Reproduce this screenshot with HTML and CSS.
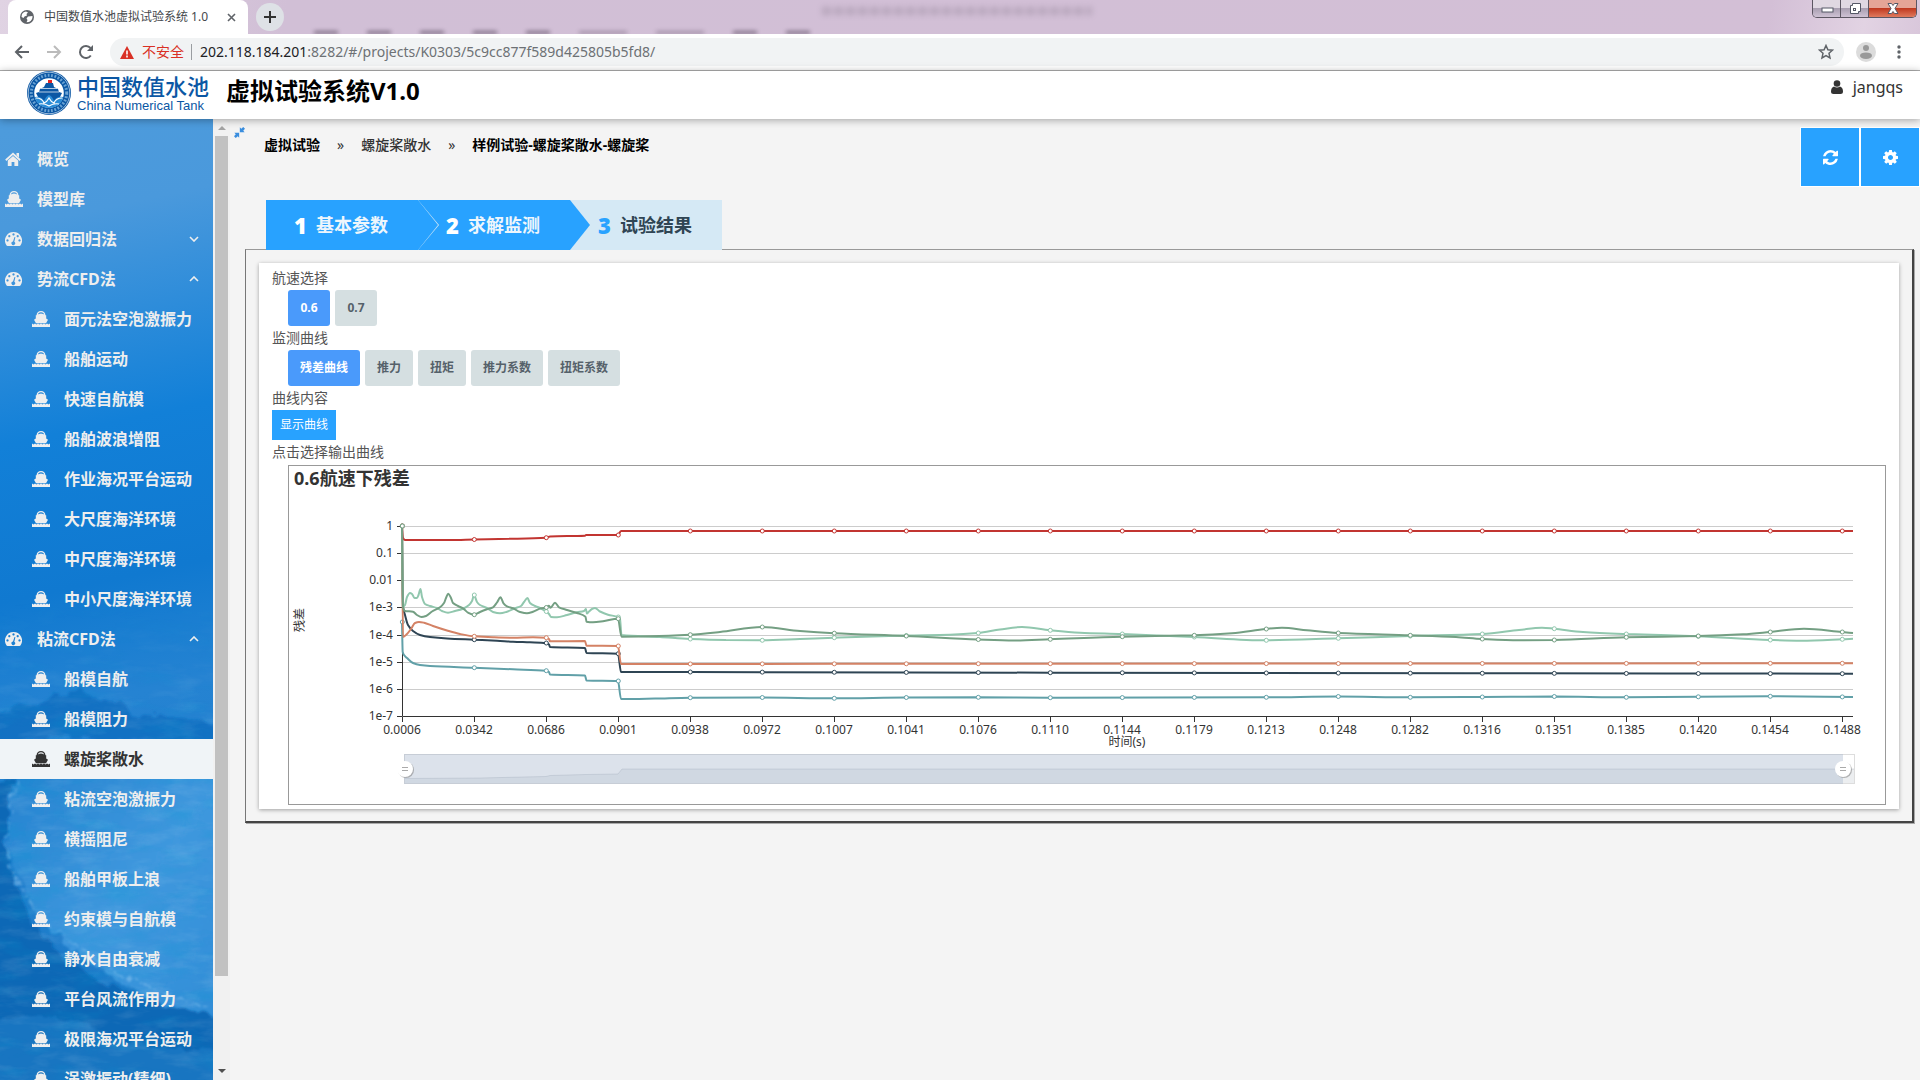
FILE: index.html
```
<!DOCTYPE html>
<html lang="zh-CN">
<head>
<meta charset="utf-8">
<title>中国数值水池虚拟试验系统 1.0</title>
<link rel="stylesheet" href="styles.css">
</head>
<body>
<svg class="defs" width="0" height="0" aria-hidden="true">
  <symbol id="i-home" viewBox="0 0 16 14"><path d="M8 .5 15.800 7.600 14.600 9 8 3 1.400 9 .2 7.600zM11.500 1h2.500v4.500l-2.500-2.200zM8 4l5.200 4.600V14H9.400v-4H6.600v4H2.800V8.600z"/></symbol>
  <symbol id="i-ship" viewBox="0 0 18 16"><path d="M4.500 4.500Q4.800 0 9 0t4.500 4.500h-1.300Q12 1.300 9 1.300T5.800 4.500zM5 4.200Q6.500 2.500 9 2.500t4 1.700h1.200v3.300l1.800 1.300L14 12.200H4L2 8.800l1.800-1.300V4.200zM0 12.600l1.500 1 1.500-1 1.500 1 1.500-1 1.500 1 1.500-1 1.500 1 1.500-1 1.500 1 1.500-1 1.500 1 1.500-1V16H0z"/></symbol>
  <symbol id="i-dash" viewBox="0 0 17 14"><path fill-rule="evenodd" d="M8.500 0A8.500 8.500 0 0 1 15.600 13.200Q15.200 14 14.500 14h-12Q1.800 14 1.400 13.200A8.500 8.500 0 0 1 8.500 0zM8.500 1.300a1.100 1.100 0 1 0 .01 0zM4.300 3a1.100 1.100 0 1 0 .01 0zM12.700 3a1.100 1.100 0 1 0 .01 0zM2.500 7.300a1.100 1.100 0 1 0 .01 0zM14.500 7.300a1.100 1.100 0 1 0 .01 0zM9.500 5 8 9.500a1.800 1.800 0 1 0 1.300.300L10.400 5.300z"/></symbol>
  <symbol id="i-down" viewBox="0 0 10 6"><path d="M1 1l4 4 4-4" fill="none" stroke="currentColor" stroke-width="1.600"/></symbol>
  <symbol id="i-up" viewBox="0 0 10 6"><path d="M1 5l4-4 4 4" fill="none" stroke="currentColor" stroke-width="1.600"/></symbol>
  <symbol id="i-refresh" viewBox="0 0 1536 1536"><path d="M1511 928q0 5-1 7-64 268-268 434.500t-478 166.500q-146 0-282.500-55t-243.500-157l-129 129q-19 19-45 19t-45-19-19-45v-448q0-26 19-45t45-19h448q26 0 45 19t19 45-19 45l-137 137q71 66 161 102t187 36q134 0 250-65t186-179q11-17 53-117 8-23 30-23h192q13 0 22.500 9.500t9.500 22.500zm25-800v448q0 26-19 45t-45 19h-448q-26 0-45-19t-19-45 19-45l138-138q-148-137-349-137-134 0-250 65t-186 179q-11 17-53 117-8 23-30 23h-199q-13 0-22.500-9.500t-9.500-22.500v-7q65-268 270-434.500t480-166.500q146 0 284 55.500t245 156.500l130-129q19-19 45-19t45 19 19 45z"/></symbol>
  <symbol id="i-cog" viewBox="0 0 1536 1536"><path d="M1024 768q0-106-75-181t-181-75-181 75-75 181 75 181 181 75 181-75 75-181zm512-109v222q0 12-8 23t-20 13l-185 28q-19 54-39 91 35 50 107 138 10 12 10 25t-9 23q-27 37-99 108t-94 71q-12 0-26-9l-138-108q-44 23-91 38-16 136-29 186-7 28-36 28h-222q-14 0-24.500-8.500t-11.500-21.500l-28-184q-49-16-90-37l-141 107q-10 9-25 9-14 0-25-11-126-114-165-168-7-10-7-23 0-12 8-23 15-21 51-66.500t54-70.500q-27-50-41-99l-183-27q-13-2-21-12.500t-8-23.500v-222q0-12 8-23t19-13l186-28q14-46 39-92-40-57-107-138-10-12-10-24 0-10 9-23 26-36 98.500-107.500t94.500-71.500q13 0 26 10l138 107q44-23 91-38 16-136 29-186 7-28 36-28h222q14 0 24.500 8.500t11.500 21.500l28 184q49 16 90 37l142-107q9-9 24-9 13 0 25 10 129 119 165 170 7 8 7 22 0 12-8 23-15 21-51 66.500t-54 70.500q26 50 41 98l183 28q13 2 21 12.500t8 23.500z"/></symbol>
</svg>

<div class="tabstrip">
  <div class="tab">
    <svg width="14" height="14" viewBox="0 0 14 14"><circle cx="7" cy="7" r="7" fill="#5f6368"/><path d="M2 4Q3.500 1.500 6 1.500L8 2.500 6.500 4 7 5.500 4.500 6.500 3.500 8 1.500 7zM8 6.500l4.500-.5Q12.800 10 9 12L6.500 12.300 7.500 10 6.500 8.500z" fill="#fff"/></svg>
    <span class="tab-title">中国数值水池虚拟试验系统 1.0</span>
    <button class="bare" aria-label="关闭标签页"><svg width="9" height="9" viewBox="0 0 9 9"><path d="M1 1l7 7M8 1l-7 7" stroke="#5f6368" stroke-width="1.600"/></svg></button>
  </div>
  <button class="newtab" aria-label="新标签页"><svg width="12" height="12" viewBox="0 0 12 12"><path d="M6 0v12M0 6h12" stroke="#333" stroke-width="2"/></svg></button>
  <div class="ghosts" aria-hidden="true">
    <i class="ghost-title"></i>
    <div class="ghost-menu"><i></i><i></i><i></i><i></i><i></i><i></i><i></i><i></i><i></i></div>
  </div>
  <div class="winbtns">
    <button aria-label="最小化"><svg width="14" height="10" viewBox="0 0 14 10"><rect x="2" y="4" width="11" height="4" fill="#fff" stroke="#555866"/></svg></button>
    <button aria-label="还原"><svg width="14" height="14" viewBox="0 0 14 14"><path d="M4.500 1.500h8v8h-2v2h-8v-8h2z" fill="#fff" stroke="#555866"/><rect x="5.500" y="6.500" width="2" height="2" fill="none" stroke="#555866"/></svg></button>
    <button class="close" aria-label="关闭"><svg width="12" height="11" viewBox="0 0 12 11"><path d="M1 .5h3.500L6 2.500 7.500.5H11L8 5.500l3 5H7.500L6 8.500l-1.500 2H1l3-5z" fill="#fff" stroke="#555866"/></svg></button>
  </div>
</div>

<div class="toolbar">
  <button class="bare" aria-label="后退"><svg width="16" height="14" viewBox="0 0 16 14"><path d="M15 7H2M8 1L2 7l6 6" fill="none" stroke="#5f6368" stroke-width="2"/></svg></button>
  <button class="bare" aria-label="前进"><svg width="16" height="14" viewBox="0 0 16 14"><path d="M1 7h13M8 1l6 6-6 6" fill="none" stroke="#bbb" stroke-width="2"/></svg></button>
  <button class="bare" aria-label="刷新"><svg width="16" height="16" viewBox="0 0 16 16"><path d="M12.800 11.500A6 6 0 1 1 12.500 4" fill="none" stroke="#5f6368" stroke-width="2"/><path d="M15 1v6H9z" fill="#5f6368"/></svg></button>
  <div class="omnibox">
    <svg width="14" height="13" viewBox="0 0 14 13"><path d="M7 0l7 13H0z" fill="#d93025"/><path d="M7 4.500v4M7 9.500v2" stroke="#fff" stroke-width="1.600"/></svg>
    <span class="unsafe">不安全</span>
    <span class="url"><b>202.118.184.201</b>:8282/#/projects/K0303/5c9cc877f589d425805b5fd8/</span>
    <svg width="16" height="16" viewBox="0 0 16 16"><path d="M8 1.500l1.900 4.300 4.600.4-3.500 3.100 1 4.600L8 11.500 4 13.900l1-4.600L1.500 6.200l4.600-.4z" fill="none" stroke="#5f6368" stroke-width="1.500"/></svg>
  </div>
  <svg width="20" height="20" viewBox="0 0 20 20"><circle cx="10" cy="10" r="10" fill="#dcdcdc"/><circle cx="10" cy="6" r="3" fill="#999"/><ellipse cx="10" cy="13.700" rx="6" ry="3.300" fill="#999"/></svg>
  <button class="bare kebab" aria-label="菜单"><svg width="4" height="14" viewBox="0 0 4 14"><g fill="#5f6368"><circle cx="2" cy="2" r="1.700"/><circle cx="2" cy="7" r="1.700"/><circle cx="2" cy="12" r="1.700"/></g></svg></button>
</div>

<header class="header">
  <svg class="seal" width="44" height="44" viewBox="0 0 44 44">
    <circle cx="22" cy="22" r="22" fill="#0b57a4"/><circle cx="22" cy="22" r="20.800" fill="none" stroke="#fff" stroke-width=".6"/>
    <circle cx="22" cy="22" r="17.700" fill="none" stroke="#6ba3d4" stroke-width="3" stroke-dasharray="1.800 1.600"/>
    <circle cx="22" cy="22" r="14.800" fill="#fff"/>
    <path d="M19 12h7l1 4 4 2 1 3 3 1-4 8H13l-4-8 3-1 1-3 4-2z" fill="#0b57a4"/>
    <path d="M14 17.500h16M12 21h20" stroke="#fff" stroke-width=".7"/>
    <path d="M21 9h4v3h-4z" fill="#e02424"/>
    <path d="M8 26q6-1 9 4 2-5 5-6 3 1 5 6 3-5 9-4-1 6-6 9-8 4-16 0-5-3-6-9z" fill="#2a8cd6"/>
    <path d="M9 27q6 0 8 5 3-1 5-5 2 4 5 5 2-5 8-5M12 33q5-1 10 2 5-3 10-2" fill="none" stroke="#fff" stroke-width="1.200"/>
  </svg>
  <div class="brand"><span class="brand-cn">中国数值水池</span><span class="brand-en">China Numerical Tank</span></div>
  <h1 class="system">虚拟试验系统V1.0</h1>
  <a class="user" href="#user"><svg width="12" height="14" viewBox="0 0 12 14"><circle cx="6" cy="3.500" r="3.300" fill="#333"/><path d="M3 6.500q3 2 6 0 3 1 3 5Q12 14 9.500 14h-7Q0 14 0 11.500q0-4 3-5z" fill="#333"/></svg>jangqs</a>
</header>

<div class="shell">
  <nav class="sidebar" aria-label="主菜单">
    <svg class="sea" viewBox="0 0 213 961" preserveAspectRatio="none" aria-hidden="true">
      <defs>
        <linearGradient id="sky" gradientUnits="userSpaceOnUse" x1="60" y1="0" x2="260" y2="940"><stop offset="0" stop-color="#4d9bdc"/><stop offset=".1" stop-color="#4a99dc"/><stop offset=".32" stop-color="#1280d8"/><stop offset=".48" stop-color="#1079d0"/><stop offset=".6" stop-color="#2583d2"/><stop offset="1" stop-color="#1a78c6"/></linearGradient>
        <linearGradient id="barrel" x1="0" y1="0" x2="1" y2="1"><stop offset="0" stop-color="#2583d0"/><stop offset=".5" stop-color="#3f98de"/><stop offset="1" stop-color="#2f8cd6"/></linearGradient>
        <filter id="foam" x="0" y="0" width="1" height="1"><feTurbulence type="fractalNoise" baseFrequency=".03 .09" numOctaves="4" seed="8"/><feColorMatrix values="0 0 0 0 1  0 0 0 0 1  0 0 0 0 1  2.200 0 0 0 -1"/></filter>
        <filter id="deep" x="0" y="0" width="1" height="1"><feTurbulence type="fractalNoise" baseFrequency=".02 .06" numOctaves="4" seed="21"/><feColorMatrix values="0 0 0 0 0  0 0 0 0 .33  0 0 0 0 .65  2.600 0 0 0 -1.200"/></filter>
        <filter id="rough" x="-.1" y="-.1" width="1.200" height="1.200"><feTurbulence type="fractalNoise" baseFrequency=".07" numOctaves="3" seed="3" result="n"/><feDisplacementMap in="SourceGraphic" in2="n" scale="16" xChannelSelector="R" yChannelSelector="G"/><feGaussianBlur stdDeviation=".8"/></filter>
        <linearGradient id="fade" x1="0" y1="0" x2="0" y2="1"><stop offset="0" stop-color="#000"/><stop offset=".3" stop-color="#fff"/></linearGradient>
        <mask id="lower"><rect y="480" width="213" height="481" fill="url(#fade)"/></mask>
      </defs>
      <rect width="213" height="961" fill="url(#sky)"/>
      <path d="M-10 592q30-6 50-6 12-14 40-13 40 8 60 24 40-2 90 12v20q-90-14-120-5-60-16-120 8z" fill="#0c6cbf" opacity=".75" filter="url(#rough)"/>
      <path d="M0 620H213V660H0z" fill="#1a79c8"/>
      <path d="M22 655H230V915Q110 870 50 810 0 745 10 700 12 670 22 655z" fill="url(#barrel)" filter="url(#rough)"/>
      <path d="M-10 660H16Q-4 720 12 750 20 800 70 845 140 885 230 902V975H-10z" fill="#0a68b6" filter="url(#rough)"/>
      <path d="M-10 905q70-20 120 12 50 18 120 12v46H-10z" fill="#2180cb" opacity=".55" filter="url(#rough)"/>
      <g mask="url(#lower)"><rect y="480" width="213" height="481" filter="url(#deep)" opacity=".2"/><rect y="480" width="213" height="481" filter="url(#foam)" opacity=".1"/></g>
      <path d="M20 662q-22 50-8 90 15 35 48 62 70 55 153 77" fill="none" stroke="#9bcdf3" stroke-width="2" stroke-dasharray="5 4 2 3 9 5" opacity=".45" filter="url(#rough)"/>
    </svg>
    <ul class="menu" id="menu"></ul>
  </nav>
  <div class="scroll" aria-hidden="true"><i class="arrow up"></i><i class="thumb"></i><i class="arrow down"></i></div>

  <main class="main">
    <div class="topbar">
      <button class="bare collapse" aria-label="收起菜单"><svg width="11" height="11" viewBox="0 0 10 10"><path d="M5.300.3v4.400h4.400L8.400 3.400 10 1.600 8.400 0 6.600 1.600zM.3 5.300h4.400v4.400L3.400 8.400 1.600 10 0 8.400l1.600-1.800z" fill="#3b8ede"/></svg></button>
      <nav class="crumbs" aria-label="位置"><a href="#lab">虚拟试验</a><span>»</span><a class="mid" href="#prop">螺旋桨敞水</a><span>»</span><a href="#sample">样例试验-螺旋桨敞水-螺旋桨</a></nav>
      <div class="actions">
        <button aria-label="刷新数据"><svg width="15" height="15"><use href="#i-refresh"/></svg></button>
        <button aria-label="设置"><svg width="15" height="15"><use href="#i-cog"/></svg></button>
      </div>
    </div>

    <ol class="steps">
      <li class="step"><a href="#s1"><b>1</b>基本参数</a></li>
      <li class="step"><a href="#s2"><b>2</b>求解监测</a></li>
      <li class="step current"><a href="#s3"><b>3</b>试验结果</a></li>
    </ol>

    <section class="panel">
      <div class="card">
        <div class="label">航速选择</div>
        <div class="choices"><button class="choice on">0.6</button><button class="choice">0.7</button></div>
        <div class="label">监测曲线</div>
        <div class="choices"><button class="choice on">残差曲线</button><button class="choice">推力</button><button class="choice">扭矩</button><button class="choice">推力系数</button><button class="choice">扭矩系数</button></div>
        <div class="label">曲线内容</div>
        <button class="show">显示曲线</button>
        <div class="label last">点击选择输出曲线</div>
        <div class="chart"><svg id="chart" viewBox="289 466 1596 338" role="img" aria-label="0.6航速下残差"></svg></div>
      </div>
    </section>
  </main>
</div>
<script src="app.js"></script>
</body>
</html>
```
FILE: styles.css
```
* { box-sizing: border-box; }
body {
  margin: 0;
  height: 100vh;
  display: flex;
  flex-direction: column;
  overflow: hidden;
  background: #f4f4f4;
  color: #333;
  font: 14px/24px "Noto Sans", "Noto Sans CJK SC", sans-serif;
}
button { font: inherit; border: 0; padding: 0; margin: 0; cursor: pointer; }
a { color: inherit; text-decoration: none; }
svg { display: block; flex: none; }
ul, ol { list-style: none; margin: 0; padding: 0; }
.defs { position: absolute; }
.bare { background: none; display: flex; align-items: center; justify-content: center; }

/* browser frame */
.tabstrip {
  flex: none;
  height: 34px;
  display: flex;
  align-items: center;
  padding-left: 8px;
  background: linear-gradient(100deg, #e0d3e3 0, #d1bfd6 15%, #d3bfd6 92%, #e2d3e3 97%, #d9c7db 100%);
}
.tab {
  width: 240px;
  height: 34px;
  display: flex;
  align-items: center;
  gap: 10px;
  padding: 0 12px;
  background: #fff;
  border-radius: 8px 8px 0 0;
}
.tab-title { flex: 1; font-size: 12px; white-space: nowrap; color: #45484c; }
.newtab {
  width: 28px;
  height: 28px;
  margin-left: 8px;
  border-radius: 50%;
  background: #dee1e6;
  display: flex;
  align-items: center;
  justify-content: center;
}
.ghosts { flex: 1; align-self: stretch; display: flex; flex-direction: column; justify-content: space-between; overflow: hidden; padding: 7px 0 0 30px; }
.ghost-title { width: 270px; height: 8px; margin-left: 508px; background: repeating-linear-gradient(90deg, #776a7c 0 9px, transparent 9px 12px); filter: blur(3px); opacity: .3; }
.ghost-menu { display: flex; gap: 29px; }
.ghost-menu i { width: 24px; height: 3px; background: #54455a; filter: blur(2px); opacity: .7; }
.ghost-menu i:nth-child(6), .ghost-menu i:nth-child(7) { width: 48px; opacity: .4; }
.winbtns {
  align-self: flex-start;
  display: flex;
  height: 18px;
  margin-right: 3px;
  border: 1px solid #5c5662;
  border-top: 0;
  border-radius: 0 0 5px 5px;
  overflow: hidden;
}
.winbtns button {
  width: 28px;
  display: flex;
  align-items: center;
  justify-content: center;
  border-right: 1px solid #5c5662;
  background: linear-gradient(#e0d8e2 0 45%, #a99fb1 50%, #cfc2d4);
}
.winbtns .close { width: 47px; border-right: 0; background: linear-gradient(#e5a596 0 45%, #c03a20 50%, #e07a5e); }
.toolbar {
  flex: none;
  height: 37px;
  display: flex;
  align-items: center;
  gap: 16px;
  padding: 0 11px 0 14px;
  background: #fff;
  border-bottom: 1px solid #b1b1b1;
}
.omnibox {
  flex: 1;
  height: 28px;
  display: flex;
  align-items: center;
  gap: 8px;
  padding: 0 10px;
  margin-right: -4px;
  border-radius: 14px;
  background: #f1f3f4;
  font-size: 14px;
}
.unsafe { color: #d93025; line-height: 16px; padding-right: 7px; border-right: 1px solid #9a9da1; }
.url { flex: 1; font-size: 14px; color: #6d7175; }
.url b { font-weight: 400; color: #202124; }
.toolbar .kebab { width: 20px; margin-left: -3px; }

/* application header */
.header {
  flex: none;
  position: relative;
  z-index: 2;
  height: 48px;
  display: flex;
  align-items: flex-start;
  padding: 0 17px 0 27px;
  background: #fff;
  box-shadow: 0 1px 8px rgba(0, 0, 0, .35);
}
.brand { display: flex; flex-direction: column; margin: 3px 0 0 6px; color: #0b57a4; }
.brand-cn { font-size: 22px; line-height: 25px; font-weight: 500; }
.brand-en { font: 13px/14px "Liberation Sans", sans-serif; }
.system { margin: 4px 0 0 17px; font-size: 24px; line-height: 32px; color: #000; }
.user { margin-left: auto; display: flex; align-items: center; gap: 10px; font-size: 16px; line-height: 32px; }

.shell { flex: 1; min-height: 0; display: flex; }

/* side menu */
.sidebar { position: relative; flex: none; width: 213px; overflow: hidden; background: #1280d8; }
.sea { position: absolute; inset: 0; width: 100%; height: 100%; }
.menu { position: relative; padding-top: 20px; }
.item { display: flex; align-items: center; height: 40px; padding: 0 14px 0 5px; color: #eee; fill: #eee; font-size: 16px; font-weight: 700; white-space: nowrap; }
.item .glyph { width: 32px; }
.item .fold { margin-left: auto; }
.item.sub { padding-left: 32px; }
.item.active { background: #f0f4f7; color: #333; fill: #333; }
.scroll { flex: none; width: 17px; display: flex; flex-direction: column; align-items: center; background: #f1f1f1; }
.thumb { width: 13px; flex: 840; background: #c1c1c1; }
.arrow { border: 4px solid transparent; }
.arrow.up { border-top: 0; border-bottom-color: #a3a3a3; margin: 7px 0 6px; }
.arrow.down { order: 2; border-bottom: 0; border-top-color: #505050; margin: auto 0 7px; }
.scroll::after { content: ""; order: 1; flex: 93; }

/* content */
.main { flex: 1; min-width: 0; overflow: auto; }
.topbar { display: flex; align-items: flex-start; padding: 8px 0 0 2px; }
.collapse { width: 14px; height: 10px; }
.crumbs { display: flex; gap: 17px; margin: 6px 0 0 18px; font-weight: 700; color: #000; }
.crumbs span { font-weight: 400; color: #333; }
.crumbs .mid { color: #333; font-weight: 500; }
.actions { margin-left: auto; display: flex; }
.actions button { width: 60px; height: 60px; border: 1px solid #fff; background: #28a2ff; fill: #fff; display: flex; align-items: center; justify-content: center; }
.steps { display: flex; position: relative; z-index: 1; margin: 13px 0 -1px 36px; }
.step { position: relative; width: 152px; height: 50px; background: #28a2ff; color: #eef6fc; font-size: 18px; font-weight: 700; line-height: 50px; }
.step a { display: flex; align-items: center; padding-left: 28px; }
.step b { width: 22px; font-size: 22px; color: #fff; }
.step:not(.current)::before, .step:not(.current)::after {
  content: "";
  position: absolute;
  z-index: 1;
  top: 0;
  left: 100%;
  width: 21px;
  height: 50px;
  background: #d5e9f5;
  clip-path: polygon(0 0, 100% 50%, 0 100%);
}
.step:not(.current)::after { width: 20px; background: #28a2ff; }
.step.current { background: #d5e9f5; color: #2f4554; }
.step.current b { color: #28a2ff; }
.panel { margin: 0 6px 16px 15px; padding: 13px 13px 12px; border: solid #444; border-width: 1px 2px 2px 1px; border-top-color: #999; border-left-color: #777; box-shadow: 1px 1px 0 #aaa; }
.card { padding: 3px 13px 4px; background: #fff; box-shadow: 0 1px 4px rgba(0, 0, 0, .35); }
.label { height: 24px; color: #555; }
.label.last { height: 25px; }
.choices { display: flex; gap: 5px; padding-left: 16px; }
.choice { height: 36px; min-width: 42px; padding: 0 12px; border-radius: 3px; background: #d5dfe1; color: #55616a; font-size: 12px; font-weight: 700; }
.choice.on { background: #4a9afb; color: #fff; }
.show { display: block; height: 30px; padding: 0 8px; background: #28a2ff; color: #fff; font-size: 12px; }
.chart { margin: 0 0 0 16px; border: 1px solid #999; }
.chart svg { width: 100%; height: auto; font-size: 12px; fill: #333; }
.chart .title { font-size: 18px; font-weight: 700; }
```
FILE: app.js
```
const MENU = [
  ['home', '概览'], ['ship', '模型库'], ['dash', '数据回归法', 'down'], ['dash', '势流CFD法', 'up'],
  '面元法空泡激振力', '船舶运动', '快速自航模', '船舶波浪增阻', '作业海况平台运动', '大尺度海洋环境', '中尺度海洋环境', '中小尺度海洋环境',
  ['dash', '粘流CFD法', 'up'],
  '船模自航', '船模阻力', '螺旋桨敞水', '粘流空泡激振力', '横摇阻尼', '船舶甲板上浪', '约束模与自航模', '静水自由衰减', '平台风流作用力', '极限海况平台运动', '涡激振动(精细)'
];
const SIZE = { home: [16, 14], ship: [18, 16], dash: [17, 14] };
document.getElementById('menu').innerHTML = MENU.map(m => {
  const sub = typeof m === 'string';
  const [icon, text, fold] = sub ? ['ship', m] : m;
  const cls = 'item' + (sub ? ' sub' : '') + (text === '螺旋桨敞水' ? ' active' : '');
  const [w, h] = SIZE[icon];
  return `<li><a class="${cls}" href="#menu"><span class="glyph"><svg width="${w}" height="${h}"><use href="#i-${icon}"/></svg></span>${text}` +
    (fold ? `<svg class="fold" width="10" height="6"><use href="#i-${fold}"/></svg>` : '') + '</a></li>';
}).join('');

const X0 = 402, X1 = 1853, Y0 = 526, Y1 = 716, STEP = 72;
const xLabels = ['0.0006', '0.0342', '0.0686', '0.0901', '0.0938', '0.0972', '0.1007', '0.1041', '0.1076', '0.1110', '0.1144', '0.1179', '0.1213', '0.1248', '0.1282', '0.1316', '0.1351', '0.1385', '0.1420', '0.1454', '0.1488'];
const yLabels = ['1', '0.1', '0.01', '1e-3', '1e-4', '1e-5', '1e-6', '1e-7'];
const series = [
  ['#c23531', '402,526 403,538 405,540 410,540 450,540 474,539.500 510,538.800 546,537.700 550,536.500 585,535.700 586,535 618,535 621,531 1300,531 1853,531'],
  ['#2f4554', '402,526 403,607 405,615 408,625 413,631 420,635 430,637 447,638.500 474,639.700 497,640.700 513,641.700 530,642.300 546,643 549,644.500 550,647 585,648 586.500,653 618,653.700 621,672 690,672 1050,672.700 1500,673.300 1853,673.700'],
  ['#61a0a8', '402,622 402.700,652 404,655 407,658 413,663 420,665 430,666 474,667.700 513,669.300 546,670.700 549,672 550,674.500 585,675.500 586.500,680.500 618,681 621,699 655,698.500 690,697.700 762,697.500 834,698.300 906,697.500 978,697.300 1050,697.700 1266,697.300 1338,696.500 1410,697.300 1482,697 1554,696.500 1626,697.300 1770,696.300 1853,697'],
  ['#d48265', '402,526 403,637 407,634 411,629 415,623 419,622 424,622.700 433,626 447,630.500 460,634 474,636.300 493,637.300 513,637.700 533,637.300 546,637.700 549,639 550,641.300 585,641 586.500,645.700 618,646 621,664 1000,663.700 1853,663.300'],
  ['#91c7ae', '402,526 403,607 405,605 407,597 410,593 412,594 414.500,598 417,598 418.500,595 420.500,589 422,597 425,604 430,606 437,608 442,611 448,612.700 455,611 463,608.700 469,605 472,601 474,595 477,602 480,605 487,608 493,612 500,613.300 507,611.700 515,608.300 521,606 524,602 527.500,598 530,603 535,606 540,608 546,611.500 549,614 551,617 557,617.300 567,615 577,612.300 584,611 586,609 586.800,613.500 589,611.500 592,609 595,608 600,611.500 608,614.700 618,617 620,619 621.500,635 660,637 690,639 726,640 762,640.300 800,639 834,637.700 906,635.500 950,634.700 978,633 1000,629.500 1022,627 1050,630.300 1080,632.700 1122,634 1194,637 1266,640.300 1338,638.300 1410,636 1482,634 1519,630 1542,627.700 1554,628.700 1583,632 1626,634 1698,636.300 1770,640 1801,640.700 1842,639.300 1853,638.700'],
  ['#749f83', '402,526 403,607 405,611 413,611.700 417,615 421.500,617 426,616 432,611.500 440,607.300 444,603 446,598 448.300,593.700 451,598 453,603 458,606 463,608.300 468,612.700 474,614.700 480,612 487,609.300 493,607.300 497,602.500 500.500,597.300 503.500,603.300 507,606.300 513,608.300 520,612 527,613.300 533,611.700 541,608.300 546,607.500 549,605.700 550.500,607.700 555,602.700 559,607.300 567,610 577,613 585.500,616.700 586.500,621.700 593,622.300 603,621.300 618,618.700 621.500,636.700 650,636.300 690,634.700 720,632 762,627 800,631 834,633.200 906,636 978,639.500 1014,640.500 1050,639.300 1122,636.700 1194,635.300 1232,633.300 1266,629 1282,627.700 1307,630.300 1338,633 1410,635.300 1456,637 1482,639 1519,640.300 1554,640 1626,637.300 1698,636 1743,634.300 1770,632 1804,628.700 1842,632 1853,633']
];

/* monotone cubic interpolation: smooth, without overshoot at the steps */
function slopes(p) {
  const d = p.slice(1).map((q, i) => (q[1] - p[i][1]) / (q[0] - p[i][0]));
  return p.map((_, i) => {
    if (i === 0) return d[0];
    if (i === p.length - 1) return d[i - 1];
    return d[i - 1] * d[i] <= 0 ? 0 : 2 * d[i - 1] * d[i] / (d[i - 1] + d[i]);
  });
}
function curve(p) {
  const m = slopes(p);
  let s = 'M' + p[0];
  for (let i = 1; i < p.length; i++) {
    const h = (p[i][0] - p[i - 1][0]) / 3;
    s += `C${p[i - 1][0] + h},${p[i - 1][1] + h * m[i - 1]} ${p[i][0] - h},${p[i][1] - h * m[i]} ${p[i]}`;
  }
  return s;
}
function valueAt(p, x) {
  for (let i = 1; i < p.length; i++) {
    if (p[i][0] >= x) return p[i - 1][1] + (p[i][1] - p[i - 1][1]) * (x - p[i - 1][0]) / (p[i][0] - p[i - 1][0]);
  }
  return p[p.length - 1][1];
}

let out = '<text class="title" x="294" y="485">0.6航速下残差</text>';
yLabels.forEach((t, i) => {
  const y = Math.round(Y0 + i * (Y1 - Y0) / 7) + .5;
  if (i < 7) out += `<path d="M${X0} ${y}H${X1}" stroke="#ccc"/>`;
  out += `<path d="M397 ${y}H${X0}" stroke="#333"/><text x="393" y="${y + 3}" text-anchor="end">${t}</text>`;
});
out += `<path d="M402.500 526V716.500H${X1}" fill="none" stroke="#333"/>`;
xLabels.forEach((t, i) => {
  const x = X0 + i * STEP;
  out += `<path d="M${x + .5} 717v5" stroke="#333"/><text x="${x}" y="734" text-anchor="middle">${t}</text>`;
});
out += '<text x="1127" y="746" text-anchor="middle">时间(s)</text><text transform="translate(304 620) rotate(-90)" text-anchor="middle">残差</text>';
for (const [color, data] of series) {
  const p = data.split(' ').map(q => q.split(',').map(Number));
  out += `<path d="${curve(p)}" fill="none" stroke="${color}" stroke-width="2" stroke-linejoin="bevel"/>`;
  xLabels.forEach((_, i) => {
    const x = X0 + i * STEP;
    out += `<circle cx="${x + .3}" cy="${valueAt(p, x)}" r="2" fill="#fff" stroke="${color}"/>`;
  });
}
out += '<rect x="404.500" y="754.500" width="1450" height="29" fill="#fff" stroke="#ddd"/>' +
  '<path d="M405 778.500 480 778 546 776.500 550 775.500 586 774.500 618 774 622 769H1854V783H405z" fill="#2f4554" opacity=".09"/>' +
  '<path d="M405 778.500 480 778 546 776.500 550 775.500 586 774.500 618 774 622 769H1854" fill="none" stroke="#2f4554" opacity=".16"/>' +
  '<rect x="404" y="754" width="1439" height="30" fill="#a7b7cc" opacity=".4"/>';
for (const x of [405, 1843]) {
  out += `<circle cx="${x + 1}" cy="770" r="8" fill="#888" opacity=".6"/><circle cx="${x}" cy="769" r="8" fill="#fff"/><path d="M${x - 3} 767.500h6M${x - 3} 770.500h6" stroke="#aaa"/>`;
}
document.getElementById('chart').innerHTML = out;
```
